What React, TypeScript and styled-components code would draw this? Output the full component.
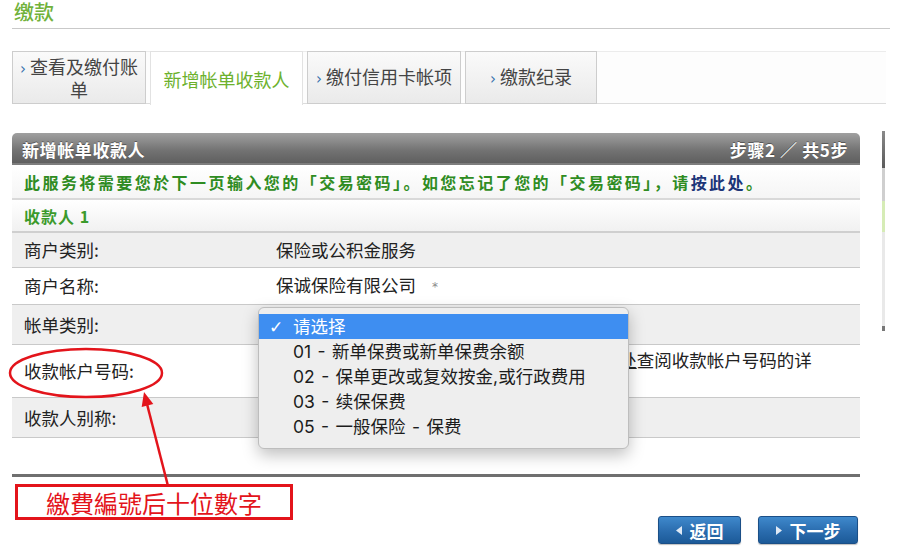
import styled, { createGlobalStyle } from "styled-components";

const GlobalStyle = createGlobalStyle`
  html, body {
    margin: 0;
    padding: 0;
    background: #ffffff;
    overflow: hidden;
  }
  body {
    font-family: "Noto Sans CJK SC", "Noto Sans", sans-serif;
    color: #222;
  }
`;

const Page = styled.div`
  position: relative;
  width: 900px;
  height: 552px;
  overflow: hidden;
`;

const TitleBar = styled.div`
  margin-left: 12px;
  width: 878px;
  height: 29px;
  border-bottom: 1px solid #c9c9c9;
  box-sizing: border-box;
  padding: 1px 0 0 2px;
  h1 {
    margin: 0;
    font-size: 20px;
    line-height: 21px;
    font-weight: 500;
    color: #71b23b;
  }
`;

const TabBar = styled.div`
  display: flex;
  gap: 4px;
  margin: 22px 0 0 12px;
  width: 874px;
  height: 53px;
  border-top: 1px solid #ececec;
  border-bottom: 1px solid #dcdcdc;
  background: #fdfdfd;
  box-sizing: border-box;
`;

const Tab = styled.div<{ $active?: boolean; $w: number }>`
  width: ${p => p.$w}px;
  height: ${p => (p.$active ? "54px" : "53px")};
  margin-top: -1px;
  box-sizing: border-box;
  display: flex;
  align-items: center;
  justify-content: center;
  text-align: center;
  font-size: 18px;
  line-height: 20px;
  padding: 0 6px;
  color: ${p => (p.$active ? "#6cb12d" : "#444")};
  background: ${p =>
    p.$active ? "#ffffff" : "linear-gradient(#fafafa, #eaeaea)"};
  border: 1px solid ${p => (p.$active ? "#e2e2e2" : "#cdcdcd")};
  border-bottom: ${p => (p.$active ? "none" : "1px solid #cdcdcd")};
`;

const Chevron = styled.span`
  color: #3470ad;
  font-size: 15px;
  margin-right: 4px;
  font-family: "DejaVu Sans", sans-serif;
`;

const PanelRow = styled.div`
  display: flex;
  align-items: flex-start;
  margin: 29px 0 0 12px;
`;

const Panel = styled.div`
  width: 848px;
`;

const PanelHeader = styled.div`
  height: 32px;
  border-radius: 5px 5px 0 0;
  background: linear-gradient(#a0a0a0, #727272 55%, #5c5c5c);
  box-shadow: inset 0 -2px 0 #7d7d7d;
  display: flex;
  align-items: center;
  justify-content: space-between;
  padding: 0 12px 0 10px;
  color: #ffffff;
  font-weight: 700;
  font-size: 17px;
  letter-spacing: 0.6px;
  text-shadow: 0 -1px 0 rgba(0, 0, 0, 0.35);
`;

const Notice = styled.div`
  height: 35px;
  box-sizing: border-box;
  display: flex;
  align-items: center;
  padding-left: 12px;
  background: linear-gradient(#ffffff, #f5f5f5);
  border-bottom: 2px solid #d9d9d9;
  color: #2f8c22;
  font-weight: 700;
  font-size: 16px;
  letter-spacing: 2.45px;
  white-space: nowrap;
  a {
    color: #1c3578;
    text-decoration: none;
  }
`;

const SubHeader = styled.div`
  height: 33px;
  box-sizing: border-box;
  display: flex;
  align-items: center;
  padding-left: 12px;
  background: linear-gradient(#ffffff, #f1f1f1);
  border-bottom: 2px solid #cfcfcf;
  color: #3b9a2b;
  font-weight: 700;
  font-size: 16px;
  letter-spacing: 1px;
`;

const FieldRow = styled.div<{ $shade?: boolean; $h: number }>`
  position: relative;
  height: ${p => p.$h}px;
  box-sizing: border-box;
  display: grid;
  grid-template-columns: 252px 1fr;
  align-items: center;
  padding: 0 45px 0 12px;
  background: ${p => (p.$shade ? "#efefef" : "#ffffff")};
  border-bottom: 1px solid #c9c9c9;
  font-size: 17.5px;
  line-height: 22px;
  color: #222;
`;

const Value = styled.div`
  a {
    color: #222;
    text-decoration: underline;
  }
`;

const Mark = styled.span`
  font-family: "DejaVu Sans", sans-serif;
  font-size: 12px;
  color: #8a8a8a;
  margin-left: 16px;
  vertical-align: middle;
`;

const Menu = styled.div`
  position: absolute;
  left: 246px;
  top: 2px;
  width: 371px;
  box-sizing: border-box;
  padding: 6px 0 9px;
  background: #eeeeee;
  border: 1px solid #bdbdbd;
  border-radius: 6px;
  box-shadow: 0 6px 16px rgba(0, 0, 0, 0.25);
  z-index: 5;
`;

const MenuItem = styled.div<{ $selected?: boolean }>`
  height: 25px;
  display: flex;
  align-items: center;
  padding-left: 10px;
  font-family: Inter, "Noto Sans CJK SC", sans-serif;
  font-size: 17.5px;
  word-spacing: 1.5px;
  white-space: pre;
  color: ${p => (p.$selected ? "#ffffff" : "#1c1c1c")};
  background: ${p => (p.$selected ? "#3e8ef1" : "transparent")};
`;

const Check = styled.span`
  width: 24px;
  font-size: 17px;
  font-family: "DejaVu Sans", sans-serif;
`;

const FooterRule = styled.div`
  margin-top: 36px;
  height: 3px;
  background: #6f6f6f;
`;

const Buttons = styled.div`
  display: flex;
  justify-content: flex-end;
  gap: 17px;
  margin-top: 39px;
  padding-right: 2px;
`;

const NavButton = styled.button<{ $w: number }>`
  width: ${p => p.$w}px;
  height: 28px;
  border: 1px solid #1b4f87;
  border-radius: 3px;
  background: linear-gradient(#3f89cc, #2a6cae 55%, #1c5a98);
  box-shadow: 0 1px 1px rgba(0, 0, 0, 0.25);
  color: #ffffff;
  font-family: "Noto Sans CJK SC", sans-serif;
  font-weight: 700;
  font-size: 17px;
  display: flex;
  align-items: center;
  justify-content: center;
  gap: 8px;
  padding: 0;
  svg {
    display: block;
  }
`;

const SideStub = styled.div`
  margin-left: 22px;
  margin-top: -2px;
  width: 3px;
  display: flex;
  flex-direction: column;
`;

const StubPart = styled.div<{ $c: string; $h: number }>`
  height: ${p => p.$h}px;
  background: ${p => p.$c};
`;

const Annotation = styled.svg`
  position: absolute;
  left: 0;
  top: 0;
  pointer-events: none;
  z-index: 6;
`;

const NoteBox = styled.div`
  position: absolute;
  left: 15px;
  top: 484px;
  width: 278px;
  height: 36px;
  box-sizing: border-box;
  border: 3px solid #e3141b;
  background: #ffffff;
  display: flex;
  align-items: center;
  justify-content: center;
  color: #e3141b;
  font-family: "Noto Sans CJK TC", sans-serif;
  font-size: 24px;
  z-index: 7;
`;

const menuOptions = [
  "01 - 新单保费或新单保费余额",
  "02 - 保单更改或复效按金,或行政费用",
  "03 - 续保保费",
  "05 - 一般保险 - 保费",
];

function Arrow({ dir }: { dir: "left" | "right" }) {
  return (
    <svg width="6" height="9" viewBox="0 0 6 9">
      {dir === "left" ? (
        <polygon points="6,0 6,9 0,4.5" fill="#dfe9f5" />
      ) : (
        <polygon points="0,0 0,9 6,4.5" fill="#dfe9f5" />
      )}
    </svg>
  );
}

export default function App() {
  return (
    <Page>
      <GlobalStyle />
      <TitleBar>
        <h1>缴款</h1>
      </TitleBar>

      <TabBar>
        <Tab $w={134}>
          <span>
            <Chevron>›</Chevron>查看及缴付账单
          </span>
        </Tab>
        <Tab $w={153} $active>
          新增帐单收款人
        </Tab>
        <Tab $w={154}>
          <span>
            <Chevron>›</Chevron>缴付信用卡帐项
          </span>
        </Tab>
        <Tab $w={132}>
          <span>
            <Chevron>›</Chevron>缴款纪录
          </span>
        </Tab>
      </TabBar>

      <PanelRow>
        <Panel>
          <PanelHeader>
            <span>新增帐单收款人</span>
            <span>步骤2 ／ 共5步</span>
          </PanelHeader>
          <Notice>
            此服务将需要您於下一页输入您的「交易密码」。如您忘记了您的「交易密码」，请<a href="#">按此处</a>。
          </Notice>
          <SubHeader>收款人 1</SubHeader>

          <FieldRow $shade $h={35}>
            <span>商户类别:</span>
            <Value>保险或公积金服务</Value>
          </FieldRow>
          <FieldRow $h={37}>
            <span>商户名称:</span>
            <Value>
              保诚保险有限公司<Mark>*</Mark>
            </Value>
          </FieldRow>
          <FieldRow $shade $h={40}>
            <span>帐单类别:</span>
            <Value />
            <Menu>
              <MenuItem $selected>
                <Check>✓</Check>请选择
              </MenuItem>
              {menuOptions.map(option => (
                <MenuItem key={option}>
                  <Check />
                  {option}
                </MenuItem>
              ))}
            </Menu>
          </FieldRow>
          <FieldRow $h={53}>
            <span>收款帐户号码:</span>
            <Value>
              请输入收款帐户号码（10位数字），您可按<a href="#">此处</a>查阅收款帐户号码的详情。
            </Value>
          </FieldRow>
          <FieldRow $shade $h={40}>
            <span>收款人别称:</span>
            <Value />
          </FieldRow>

          <FooterRule />
          <Buttons>
            <NavButton $w={83}>
              <Arrow dir="left" />
              返回
            </NavButton>
            <NavButton $w={100}>
              <Arrow dir="right" />
              下一步
            </NavButton>
          </Buttons>
        </Panel>

        <SideStub>
          <StubPart $c="linear-gradient(#8a8a8a, #5a5a5a)" $h={37} />
          <StubPart $c="#cfcfcf" $h={33} />
          <StubPart $c="#d6ecb6" $h={31} />
          <StubPart $c="#e9e9e9" $h={94} />
          <StubPart $c="#777777" $h={5} />
        </SideStub>
      </PanelRow>

      <Annotation width="900" height="552" viewBox="0 0 900 552">
        <ellipse
          cx="86"
          cy="373"
          rx="76"
          ry="24"
          fill="none"
          stroke="#e3141b"
          strokeWidth="2.5"
        />
        <line
          x1="168"
          y1="486"
          x2="147"
          y2="404"
          stroke="#e3141b"
          strokeWidth="2.5"
        />
        <polygon points="144,392 153.3,404.1 141.7,407.1" fill="#e3141b" />
      </Annotation>
      <NoteBox>繳費編號后十位數字</NoteBox>
    </Page>
  );
}
